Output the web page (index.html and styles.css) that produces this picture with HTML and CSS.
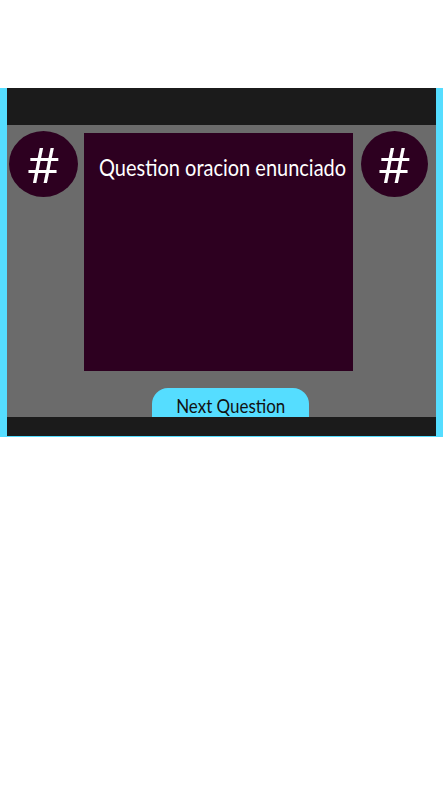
FILE: index.html
```html
<!DOCTYPE html>
<html>
<head>
<meta charset="utf-8">
<link rel="stylesheet" href="styles.css">
</head>
<body>
<div class="frame">
  <div class="topbar"></div>
  <div class="main">
    <div class="row">
      <div class="badge">#</div>
      <div class="question"><span class="question-text">Question oracion enunciado</span></div>
      <div class="badge badge-right">#</div>
    </div>
    <button class="next"><span class="next-text">Next Question</span></button>
  </div>
  <div class="bottombar"></div>
</div>
</body>
</html>
```
FILE: styles.css
```css
html, body {
  margin: 0;
  padding: 0;
  background: #ffffff;
}
.frame {
  margin-top: 88px;
  width: 429px;
  padding: 0 7px 1px 7px;
  background: #55ddff;
  font-family: Lato, "Open Sans", sans-serif;
}
.topbar {
  height: 37px;
  background: #1b1b1b;
}
.main {
  height: 292px;
  background: #6b6b6b;
  overflow: hidden;
  display: flex;
  flex-direction: column;
}
.row {
  display: flex;
  align-items: flex-start;
  padding: 6px 0 0 2px;
}
.badge {
  width: 69px;
  height: 66px;
  border-radius: 50%;
  background: #2d0020;
  color: #ffffff;
  font-family: "Open Sans", sans-serif;
  font-size: 50px;
  line-height: 66px;
  text-align: center;
  flex: none;
}
.badge-right {
  width: 67px;
  margin-left: 8px;
}
.question {
  width: 269px;
  height: 238px;
  margin: 2px 0 0 6px;
  padding: 20px 0 0 15px;
  box-sizing: border-box;
  background: #2d0020;
  color: #ffffff;
  font-size: 23.5px;
  line-height: 28px;
  white-space: nowrap;
  flex: none;
}
.question-text {
  display: inline-block;
  transform: scaleX(0.85);
  transform-origin: left center;
}
.next {
  align-self: flex-start;
  margin: 17px 0 0 145px;
  width: 157px;
  height: 44px;
  border: none;
  border-radius: 16px 16px 0 0;
  background: #55ddff;
  color: #111111;
  font-family: Lato, "Open Sans", sans-serif;
  font-size: 19.5px;
  padding: 0;
  line-height: 36px;
  text-align: center;
}
.next-text {
  display: inline-block;
  transform: scaleX(0.87);
}
.bottombar {
  height: 19px;
  background: #1b1b1b;
}
```
